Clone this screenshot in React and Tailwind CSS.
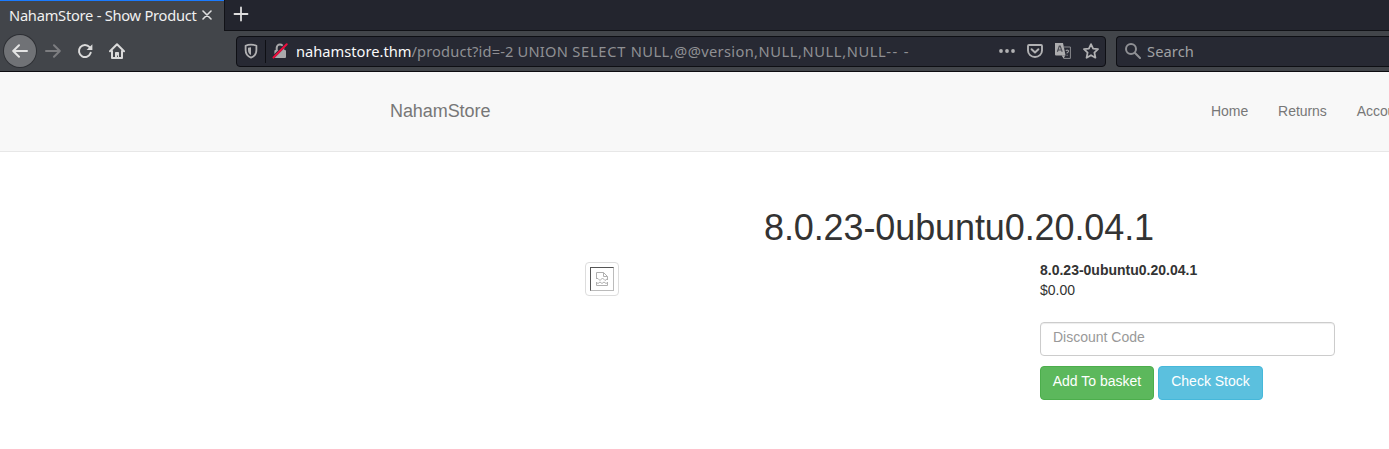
import React from "react";

const stroke = {
  fill: "none",
  stroke: "currentColor",
  strokeWidth: 2,
  strokeLinecap: "round",
  strokeLinejoin: "round",
};

function Icon({ className = "", children }) {
  return (
    <svg viewBox="0 0 16 16" className={"h-4 w-4 shrink-0 " + className}>
      {children}
    </svg>
  );
}

function BackIcon() {
  return (
    <Icon className="text-[#e4e4e4]">
      <path d="M15 8H1.6M7 2.2L1.2 8L7 13.8" {...stroke} />
    </Icon>
  );
}

function ForwardIcon() {
  return (
    <Icon className="text-[#7c7d80]">
      <path d="M1 8H14.4M9 2.2L14.8 8L9 13.8" {...stroke} />
    </Icon>
  );
}

function ReloadIcon() {
  return (
    <Icon className="text-[#dadada]">
      <path d="M12.6 4.2A6 6 0 1 0 13.7 9.8" {...stroke} />
      <path d="M15.4 1.2V7H9.6Z" fill="currentColor" />
    </Icon>
  );
}

function HomeIcon() {
  return (
    <Icon className="text-[#dadada]">
      <path d="M1 8.2L8 1.2L15 8.2M3 8V15H13V8" {...stroke} />
      <path d="M6 15V9.8Q6 9 6.8 9H9.2Q10 9 10 9.8V15H8.9V12.6H8V15Z" fill="currentColor" />
    </Icon>
  );
}

function ShieldIcon() {
  return (
    <Icon className="text-[#b1b1b3]">
      <path
        d="M8 1.6C10 1.6 12 2.1 13.4 2.8V7C13.4 10.8 11.4 13.4 8 14.6C4.6 13.4 2.6 10.8 2.6 7V2.8C4 2.1 6 1.6 8 1.6Z"
        {...stroke}
        strokeWidth="1.8"
      />
      <path d="M8 4.2V12C6 11 5 9.4 5 7V4.7C6 4.4 7 4.2 8 4.2Z" fill="currentColor" />
    </Icon>
  );
}

function InsecureLockIcon() {
  return (
    <Icon className="text-[#a9a9ab]">
      <path d="M4.7 7V4.8a3.3 3.3 0 0 1 6.6 0V7" {...stroke} />
      <rect x="2.4" y="7" width="11.6" height="8" rx="1" fill="currentColor" />
      <path d="M1.2 14.2L14.5 .9" stroke="#272933" strokeWidth="2.8" />
      <path d="M1.5 14.5L14.7 1.3" stroke="#ef0d3e" strokeWidth="2" strokeLinecap="round" />
    </Icon>
  );
}

function PocketIcon() {
  return (
    <Icon className="text-[#b1b1b3]">
      <path d="M2 2H14Q15 2 15 3V7.5A7 6.5 0 0 1 1 7.5V3Q1 2 2 2Z" {...stroke} strokeWidth="1.9" />
      <path d="M4.6 6.3L8 9.5L11.4 6.3" {...stroke} />
    </Icon>
  );
}

function TranslateIcon() {
  return (
    <Icon>
      <path d="M0 0H8L10.6 12.5H1Q0 12.5 0 11.5Z" fill="#adadaf" />
      <path d="M2.4 8.8L4.3 3H5.2L7.2 8.8M3 7H6.6" fill="none" stroke="#4b4c54" strokeWidth="1.2" />
      <path d="M8.6 4H15.4V15.4H8.8L7.5 12.5" fill="none" stroke="#8a8b90" />
      <path d="M6.8 12.5H10.2L8.7 15.5Z" fill="#adadaf" />
      <path d="M10.8 8Q12 6.6 13.2 7.5T12.1 9.7V10.5M12.1 11.7V12.7" fill="none" stroke="#96979b" strokeWidth="1.1" />
    </Icon>
  );
}

function StarIcon() {
  return (
    <Icon className="text-[#b1b1b3]">
      <path
        d="M8 1.1L10.1 5.6L15 6.2L11.4 9.6L12.4 14.7L8 12.2L3.6 14.7L4.6 9.6L1 6.2L5.9 5.6Z"
        {...stroke}
        strokeWidth="1.8"
      />
    </Icon>
  );
}

function BrokenImageIcon() {
  return (
    <svg viewBox="0 0 14 16" className="h-4 w-3.5" fill="none" stroke="#b0b0b0">
      <path d="M1.5 8V1.5H8.5L12.5 5.5V9M8.5 1.5V5.5H12.5" />
      <path d="M1.5 7.5H3L5 9.5L7.5 7L10 9.5L12 8" />
      <path d="M1.5 11V14.5H12.5V11M1.5 11.5L3 12.5L5 11L7 12.5L9 11L11 12.5L12.5 11.5" />
    </svg>
  );
}

function TabStrip() {
  return (
    <div className="flex h-[31px] bg-[#23252e]">
      <div className="flex w-[224px] items-center border-t border-[#1a7bff] bg-[#42454a] pb-[3px] pl-[9px]">
        <span className="w-[189px] whitespace-nowrap text-[14.67px] leading-5 tracking-[-0.25px] text-[#f0f0f0]">
          NahamStore - Show Product
        </span>
        <svg viewBox="0 0 10 10" className="mt-px ml-1 h-[10px] w-[10px] text-[#dededf]">
          <path d="M1 1L9 9M9 1L1 9" {...stroke} strokeWidth="1.6" />
        </svg>
      </div>
      <div className="flex flex-1 items-center border-b border-l border-[#111217] pl-2">
        <svg viewBox="0 0 16 16" className="-mt-0.5 h-4 w-4 text-[#dedede]">
          <path d="M8 1.5V14.5M1.5 8H14.5" {...stroke} strokeWidth="1.8" />
        </svg>
      </div>
    </div>
  );
}

function Address() {
  return (
    <span className="ml-2 flex-1 whitespace-pre text-[14.67px] leading-5 text-[#8f9094]">
      <span className="text-[#f9f9fa]">nahamstore.thm</span>
      <span className="tracking-[0.14px]">{"/product?id=-2 "}</span>
      <span className="tracking-[0.25px]">{"UNION "}</span>
      <span className="tracking-[0.74px]">{"SELECT "}</span>
      <span className="tracking-[0.46px]">NULL,</span>
      <span className="tracking-[0.35px]">@@version,</span>
      <span className="tracking-[0.6px]">NULL,NULL,NULL</span>
      <span className="tracking-[1.4px]">{"-- -"}</span>
    </span>
  );
}

function Toolbar() {
  return (
    <div className="flex h-[41px] items-center border-b border-[#0c0c10] bg-[#42454a] pl-1">
      <div className="flex h-8 w-8 items-center justify-center rounded-full bg-[#707276] ring-1 ring-[#2e3035]">
        <BackIcon />
      </div>
      <div className="ml-[9px] flex gap-4">
        <ForwardIcon />
        <ReloadIcon />
        <HomeIcon />
      </div>
      <div className="ml-[111px] flex h-[31px] w-[870px] shrink-0 items-center rounded-[4px] border border-[#0e0f14] bg-[#272933] pr-[6px] pl-[6px]">
        <ShieldIcon />
        <div className="ml-[6px] h-[23px] w-px bg-[#0e0f14]" />
        <div className="ml-[6px] flex">
          <InsecureLockIcon />
        </div>
        <Address />
        <div className="flex gap-3">
          <Icon className="text-[#b1b1b3]">
            <circle cx="2" cy="8" r="1.9" fill="currentColor" />
            <circle cx="8" cy="8" r="1.9" fill="currentColor" />
            <circle cx="14" cy="8" r="1.9" fill="currentColor" />
          </Icon>
          <PocketIcon />
          <TranslateIcon />
          <StarIcon />
        </div>
      </div>
      <div className="ml-[10px] flex h-[31px] flex-1 items-center rounded-l-[4px] border border-r-0 border-[#0e0f14] bg-[#272933] pl-2 text-[#8f9094]">
        <Icon>
          <circle cx="6" cy="6" r="5" {...stroke} />
          <path d="M9.8 9.8L15 15" {...stroke} />
        </Icon>
        <span className="ml-[6px] text-[14.67px] leading-5 tracking-[0.1px] text-[#a0a1a4]">Search</span>
      </div>
    </div>
  );
}

function SiteHeader() {
  return (
    <header className="flex h-20 border-b border-[#e7e7e7] bg-[#f8f8f8] pt-[29px] pl-[390px] leading-5 text-[#777]">
      <a className="w-[821px] shrink-0 text-[18px] tracking-[-0.07px]">NahamStore</a>
      <nav className="flex gap-[30px] whitespace-nowrap tracking-[-0.06px]">
        <a>Home</a>
        <a>Returns</a>
        <a>Account</a>
      </nav>
    </header>
  );
}

function Product() {
  return (
    <main className="flex-1 pt-[56px]">
      <h1 className="w-[1534px] pl-[384px] text-center text-[36px] leading-[40px] tracking-[-0.1px] text-[#333]">
        8.0.23-0ubuntu0.20.04.1
      </h1>
      <div className="flex pt-[14px] pl-[585px]">
        <div className="h-[34px] w-[34px] shrink-0 rounded-[4px] border border-[#ddd] p-1">
          <div className="flex h-6 w-6 items-center justify-center border border-t-[#555] border-r-[#bbb] border-b-[#bbb] border-l-[#555]">
            <BrokenImageIcon />
          </div>
        </div>
        <div className="-mt-[2px] ml-[421px] w-[295px] shrink-0 leading-5">
          <div className="font-bold">8.0.23-0ubuntu0.20.04.1</div>
          <div>$0.00</div>
          <div className="mt-[22px] h-[34px] rounded-[4px] border border-[#ccc] px-3 pt-[4px] text-[#999] shadow-[inset_0_1px_1px_rgba(0,0,0,0.075)]">
            Discount Code
          </div>
          <div className="mt-[10px] flex gap-1 whitespace-nowrap text-white">
            <button className="flex h-[34px] w-[114px] justify-center rounded-[4px] border border-[#4cae4c] bg-[#5cb85c] pt-[4px]">
              Add To basket
            </button>
            <button className="flex h-[34px] w-[105px] justify-center rounded-[4px] border border-[#46b8da] bg-[#5bc0de] pt-[4px]">
              Check Stock
            </button>
          </div>
        </div>
      </div>
    </main>
  );
}

export default function App() {
  return (
    <div className="flex h-[449px] w-[1389px] flex-col overflow-hidden bg-white">
      <div className="font-['Noto_Sans',sans-serif]">
        <TabStrip />
        <Toolbar />
      </div>
      <div className="flex flex-1 flex-col font-['Liberation_Sans',Arial,sans-serif] text-[14px] text-[#333]">
        <SiteHeader />
        <Product />
      </div>
    </div>
  );
}
